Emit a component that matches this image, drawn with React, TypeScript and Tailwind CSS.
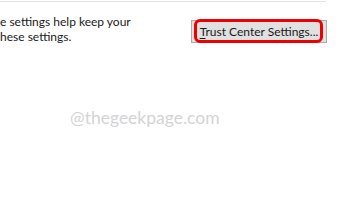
import React from "react";

export default function App() {
  return (
    <div className="w-[342px] h-[215px] bg-white overflow-hidden" style={{ fontFamily: 'Lato, "Noto Sans", sans-serif' }}>
      <div className="mt-px h-px w-[326px] bg-[#e3e3e3]" />
      <div className="flex justify-between">
        <div className="mt-[12px] text-[12px] leading-[15px] text-[#1a1a1a] whitespace-nowrap">
          <div>e settings help keep your</div>
          <div>hese settings.</div>
        </div>
        <div className="relative mt-[18px] mr-[15px] flex h-[23px] w-[136px] items-center justify-center border border-[#adadad] bg-[#e1e1e1] text-[12px] text-[#1a1a1a]">
          <span className="whitespace-nowrap">
            <span className="underline underline-offset-2">T</span>rust Center Settings...
          </span>
          <div className="absolute left-[2px] right-[3px] top-[-2px] bottom-[-1px] rounded-[6px] border-[3px] border-[#ee0000]" />
        </div>
      </div>
      <div className="ml-[70px] mt-[63px] text-[17.5px] leading-[22px] text-[#d4d4d4] whitespace-nowrap">
        @thegeekpage.com
      </div>
    </div>
  );
}
